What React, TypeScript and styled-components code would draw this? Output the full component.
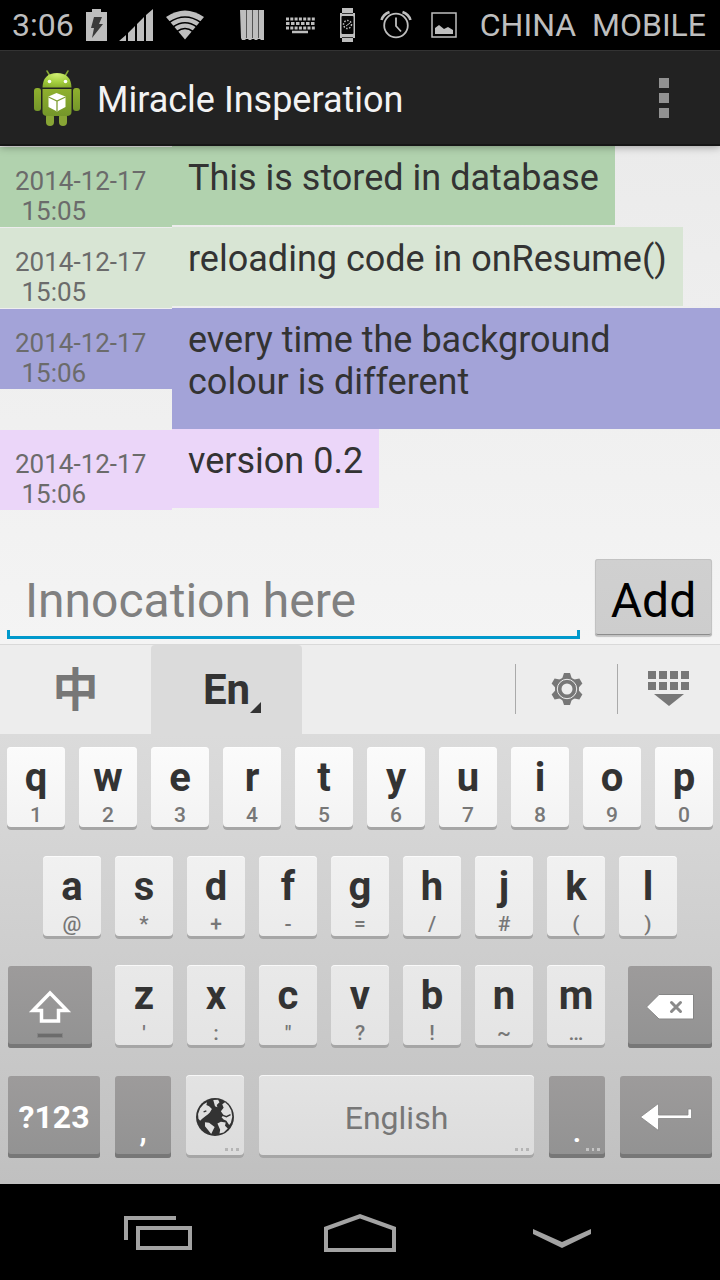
import React from "react";
import styled, { createGlobalStyle, css } from "styled-components";

const GlobalStyle = createGlobalStyle`
  * { box-sizing: border-box; }
  body { margin: 0; background: #000; font-family: Roboto, "Noto Sans CJK SC", sans-serif; }
  button, input { font: inherit; color: inherit; border: 0; padding: 0; margin: 0; background: none; border-radius: 0; outline: none; }
  h1, p { margin: 0; font-weight: 400; }
  svg { display: block; }
`;

const Screen = styled.div`
  min-height: 100vh;
  display: flex;
  flex-direction: column;
  background: #000;
`;

/* ---------- status bar ---------- */
const StatusBar = styled.header`
  height: 50px;
  display: flex;
  align-items: center;
  justify-content: space-between;
  padding: 0 14px 0 12px;
  color: #bebebe;
  font-size: 32px;
  line-height: 50px;
  white-space: pre;
`;
const StatusGroup = styled.div<{ $gap: number }>`
  display: flex;
  align-items: center;
  gap: ${(p) => p.$gap}px;
`;
const StatusSlots = styled.div`
  display: flex;
  svg { width: 48px; height: 36px; }
`;

/* ---------- action bar ---------- */
const ActionBar = styled.div`
  position: relative;
  height: 96px;
  display: flex;
  align-items: center;
  gap: 16px;
  padding: 0 32px;
  background: #222;
  border-top: 1px solid #333;
  border-bottom: 2px solid #161616;
  box-shadow: 0 1px 8px rgba(0, 0, 0, 0.35);
  color: #f3f3f3;
`;
const Title = styled.h1`
  flex: 1;
  padding-top: 4px;
  font-size: 36px;
  line-height: 42px;
`;
const MenuButton = styled.button`
  width: 48px;
  height: 48px;
  display: grid;
  place-items: center;
`;

/* ---------- entries ---------- */
const Content = styled.main`
  flex: 1;
  display: flex;
  flex-direction: column;
  background: linear-gradient(#ebebeb, #f4f4f4);
`;
const Entries = styled.div`
  flex: 1;
`;
const Entry = styled.div`
  display: flex;
  align-items: flex-start;
  color: #333;
`;
const Stamp = styled.time<{ $tint: string }>`
  flex: none;
  width: 172px;
  height: 80px;
  margin-top: 1px;
  padding: 19px 15px 0;
  background: ${(p) => p.$tint};
  color: #6b6b6b;
  font-size: 26px;
  line-height: 30px;
  white-space: pre;
`;
const Message = styled.p<{ $tint: string }>`
  padding: 11px 16px 26px;
  background: ${(p) => p.$tint};
  font-size: 36px;
  line-height: 42px;
`;

const Composer = styled.form`
  display: flex;
  align-items: flex-end;
  gap: 15px;
  padding: 0 8px 8px 7px;
`;
const Field = styled.input`
  flex: 1;
  min-width: 0;
  height: 80px;
  margin-bottom: -3px;
  padding: 2px 18px 0;
  font-size: 48px;
  color: #333;
  background:
    linear-gradient(#0099cc, #0099cc) left bottom / 100% 3px no-repeat,
    linear-gradient(#0099cc, #0099cc) left bottom / 3px 9px no-repeat,
    linear-gradient(#0099cc, #0099cc) right bottom / 3px 9px no-repeat;
  &::placeholder { color: #808080; opacity: 1; }
`;
const AddButton = styled.button`
  width: 117px;
  height: 77px;
  padding-top: 7px;
  border-radius: 3px;
  background: linear-gradient(#d0d0d0, #cdcdcd);
  box-shadow: inset 0 0 0 1px #c2c2c2, inset 0 -2px 0 #8c8c8c, 0 1px 1px rgba(0, 0, 0, 0.2);
  color: #000;
  font-size: 48px;
  line-height: 56px;
`;

/* ---------- keyboard ---------- */
const ToolStrip = styled.div`
  height: 90px;
  display: flex;
  padding-right: 1px;
  background: #ededed;
  border-top: 1px solid #d9d9d9;
`;
const Tab = styled.button<{ $active?: boolean }>`
  width: 21%;
  display: flex;
  align-items: center;
  justify-content: center;
  color: ${(p) => (p.$active ? "#333" : "#777")};
  font-size: ${(p) => (p.$active ? 42 : 46)}px;
  font-weight: 700;
  background: ${(p) => (p.$active ? "#dbdbdb" : "none")};
  padding: ${(p) => (p.$active ? "0 0 0 11px" : "0 0 8px")};
  border-radius: 4px 4px 0 0;
  svg { align-self: flex-end; margin: 0 0 21px 0; }
`;
const Filler = styled.div`
  flex: 1;
`;
const Tool = styled.button`
  width: 102px;
  height: 50px;
  margin-top: 19px;
  display: grid;
  place-items: center;
  border-left: 1px solid #aaa;
`;
const Keys = styled.div`
  display: flex;
  flex-direction: column;
  gap: 26px;
  padding: 13px 0 26px;
  background: linear-gradient(#dbdbdb, #c0c0c0);
`;
const Row = styled.div<{ $pad: number; $gap: number }>`
  display: flex;
  gap: ${(p) => p.$gap}px;
  padding: 0 ${(p) => p.$pad}px;
  &:last-child { padding-top: 1px; }
`;
const LetterGroup = styled.div`
  flex: 490 1 0;
  min-width: 0;
  display: flex;
  gap: 14px;
`;
const shades = [
  ["#fbfbfb", "#f3f3f3"],
  ["#f1f1f1", "#ebebeb"],
  ["#e9e9e9", "#e4e4e4"],
  ["#e3e3e3", "#dcdcdc"],
];
const Key = styled.button<{ $grow: number; $shade?: number; $dark?: boolean }>`
  position: relative;
  flex: ${(p) => p.$grow} 1 0;
  min-width: 0;
  height: 83px;
  display: flex;
  flex-direction: column;
  align-items: center;
  border-radius: 4px;
  ${(p) =>
    p.$dark
      ? css`
          height: 82px;
          margin-top: 1px;
          border-radius: 3px;
          justify-content: center;
          color: #fff;
          background: linear-gradient(#9d9b9b, #929292);
          box-shadow: inset 0 -4px 0 #777;
        `
      : css`
          color: #333;
          background: linear-gradient(${shades[p.$shade || 0].join(",")});
          box-shadow: inset 0 1px 0 rgba(255, 255, 255, 0.7), inset 0 -3px 0 #a6a6a6;
        `}
`;
const Letter = styled.span`
  font-size: 40px;
  line-height: 62px;
  font-weight: 700;
`;
const Alt = styled.span`
  font-size: 21px;
  line-height: 13px;
  font-weight: 500;
  color: #777;
`;
const ModeLabel = styled.span`
  font-size: 32px;
  line-height: 40px;
  font-weight: 700;
`;
const Punct = styled.span`
  padding-top: 28px;
  font-size: 32px;
  line-height: 40px;
  font-weight: 500;
`;
const SpaceLabel = styled.span`
  line-height: 86px;
  font-size: 32px;
  color: #777;
`;
const Centered = styled.span`
  flex: 1;
  display: grid;
  place-items: center;
`;
const More = styled.svg`
  position: absolute;
  right: 5px;
  bottom: 7px;
`;

/* ---------- navigation bar ---------- */
const NavBar = styled.nav`
  height: 96px;
  display: flex;
  padding: 0 57px;
`;
const NavButton = styled.button`
  flex: 1;
  display: grid;
  place-items: center;
  padding-top: 2px;
`;

const Dots = ({ fill }: { fill: string }) => (
  <More width="14" height="3" viewBox="0 0 14 3" fill={fill} aria-hidden="true">
    <path d="M0 0h3v3H0zM6 0h2v3H6zM11 0h3v3h-3z" />
  </More>
);

const StatusLeftIcons = () => (
  <>
    <svg width="21" height="32" viewBox="0 0 21 32" fill="#bebebe">
      <path d="M6 0h9v3h6v29H0V3h6z" />
      <path d="M8 8h8l-3 7h4L6 29l2-10H5z" fill="#3a3a3a" />
    </svg>
    <svg width="34" height="32" viewBox="0 0 34 32" fill="#bebebe">
      <path d="M0 32l7-6v6zM9 24l7-7v15H9zM18 15l7-7v24h-7zM27 6l7-6v32h-7z" />
    </svg>
    <svg width="40" height="30" viewBox="0 0 40 30">
      <path d="M1 7Q20-6 39 7L20 29.500z" fill="#bebebe" />
      <path d="M4 12.500Q20 1.500 36 12.500M8 17Q20 8.500 32 17M12 21.500Q20 15.500 28 21.500" fill="none" stroke="#000" strokeWidth="1.600" />
    </svg>
  </>
);

const StatusRightIcons = () => (
  <StatusSlots>
    <svg viewBox="0 0 48 36">
      <path d="M12 3h24v30h-3l-1-1h-2l-1 1h-2l-1-1h-2l-1 1h-2l-1-1h-2l-1 1h-3l-1-2z" fill="#bebebe" />
      <path d="M18.500 3v28M24.500 3v28M30.500 3v28" stroke="#555" />
    </svg>
    <svg viewBox="0 0 48 36" fill="none" stroke="#bebebe">
      <path d="M10 12h29" strokeWidth="3" strokeDasharray="3 1.300" />
      <path d="M10 16.500h29" strokeWidth="3" strokeDasharray="3.500 1.500" />
      <path d="M10 21h29" strokeWidth="3" strokeDasharray="3 1.300" />
      <path d="M16 25h16" strokeWidth="2.500" />
    </svg>
    <svg viewBox="0 0 48 36">
      <path d="M18 1h11v5h2v25h-2v4H18v-4h-2V6h2z" fill="#bebebe" />
      <rect x="17.500" y="9" width="12" height="18" rx="1" fill="#050505" />
      <path d="M18 6.500h11M18 30.500h11" stroke="#333" />
      <circle cx="23.500" cy="17.500" r="4" fill="none" stroke="#bebebe" strokeWidth="1.500" strokeDasharray="1.500 1.500" />
      <path d="M22 19l4-3" stroke="#bebebe" />
    </svg>
    <svg viewBox="0 0 48 36" fill="none" stroke="#bebebe">
      <circle cx="24" cy="18.500" r="11.800" strokeWidth="1.800" />
      <path d="M24 10.500v8.500l5 5.500" strokeWidth="1.800" />
      <path d="M9.500 13Q11 7.500 17.500 5M38.500 13Q37 7.500 30.500 5" strokeWidth="2.500" />
    </svg>
    <svg viewBox="0 0 48 36">
      <rect x="12" y="6" width="24" height="24" fill="none" stroke="#bebebe" strokeWidth="1.500" />
      <path d="M15 27v-6l4-3 5 4 4-2 5 3v4z" fill="#bebebe" />
    </svg>
  </StatusSlots>
);

const AppIcon = () => (
  <svg width="49" height="58" viewBox="0 0 49 58" aria-hidden="true">
    <defs>
      <linearGradient id="body" x1="0" y1="0" x2="0" y2="1">
        <stop offset="0" stopColor="#8fb02e" />
        <stop offset="1" stopColor="#74962a" />
      </linearGradient>
      <radialGradient id="head" cx="0.5" cy="0.1" r="0.9">
        <stop offset="0" stopColor="#d0ee72" />
        <stop offset="0.6" stopColor="#a4cf3e" />
        <stop offset="1" stopColor="#8ab02e" />
      </radialGradient>
    </defs>
    <path d="M15 2l3 5M36 2l-3 5" stroke="#86a832" strokeWidth="1.500" strokeLinecap="round" />
    <rect x="2" y="19" width="7" height="23" rx="3" fill="url(#body)" />
    <rect x="41" y="19" width="7" height="23" rx="3" fill="url(#body)" />
    <rect x="14" y="44" width="8" height="13" rx="4" fill="#88a535" />
    <rect x="27" y="44" width="8" height="13" rx="4" fill="#88a535" />
    <path d="M10.500 20h29v23q0 4-5 4h-19q-5 0-5-4z" fill="url(#body)" />
    <path d="M10.500 18.500Q11 4 25 4t14.500 14.500z" fill="url(#head)" />
    <circle cx="17.500" cy="12.500" r="1.800" fill="#fff" />
    <circle cx="33.500" cy="12.500" r="1.800" fill="#fff" />
    <path d="M24.500 24l9 3.500v10.500l-8.500 4.500-8.500-4.500V27.500z" fill="#fff" />
    <path d="M16.500 28l8.500 4 8.500-4M25 32v10" fill="none" stroke="#7f9e33" strokeWidth="1.300" />
  </svg>
);

const GearIcon = () => (
  <svg width="32" height="32" viewBox="0 0 32 32" aria-hidden="true">
    <g fill="#777">
      {[0, 60, 120].map((a) => (
        <path key={a} d="M13 0h6l2 6v20l-2 6h-6l-2-6V6z" transform={`rotate(${a} 16 16)`} />
      ))}
      <circle cx="16" cy="16" r="12" />
    </g>
    <circle cx="16" cy="16" r="9.700" fill="none" stroke="#ededed" strokeWidth="1" />
    <circle cx="16" cy="16" r="5.500" fill="#ededed" />
  </svg>
);

const HideKeyboardIcon = () => (
  <svg width="42" height="36" viewBox="0 0 42 36" fill="#777" aria-hidden="true">
    {[0, 11, 22, 33].map((x) => (
      <path key={x} d={`M${x} 0h8v8h-8zM${x} 11h8v8h-8z`} />
    ))}
    <path d="M6 23h30L21 35z" />
  </svg>
);

const GlobeIcon = () => (
  <svg width="38" height="38" viewBox="0 0 110 110" aria-hidden="true">
    <circle cx="55" cy="55" r="55" fill="#333" />
    <g fill="#e0e0e0">
      <path d="M6 46L12 30 22 18 32 12 30 20 38 24 46 32 40 42 34 48 28 52 18 60 12 66 7 60z" />
      <path d="M26 70L38 72 54 84 50 92 44 104 36 94 26 82z" />
      <path d="M62 74L72 69 86 71 84 80 92 88 80 100 68 103 70 92z" />
      <path d="M84 12L94 22 102 36 105 54 101 72 96 78 88 66 80 62 74 56 80 50 76 44 72 38 80 28 76 18z" />
      <path d="M50 6L64 5 68 12 60 20 62 27 55 24z" />
    </g>
    <path d="M74 49l14 5 12-6M22 40l8-3" stroke="#333" strokeWidth="4" fill="none" />
  </svg>
);

const entries = [
  { day: "2014-12-17", hour: "15:05", text: "This is stored in database", tint: "#b1d2ae" },
  { day: "2014-12-17", hour: "15:05", text: "reloading code in onResume()", tint: "#d8e5d4" },
  { day: "2014-12-17", hour: "15:06", text: "every time the background colour is different", tint: "#a3a3d8" },
  { day: "2014-12-17", hour: "15:06", text: "version 0.2", tint: "#ebd6f9" },
];

const row1 = ["q1", "w2", "e3", "r4", "t5", "y6", "u7", "i8", "o9", "p0"];
const row2 = ["a@", "s*", "d+", "f-", "g=", "h/", "j#", "k(", "l)"];
const row3 = ["z'", "x:", 'c"', "v?", "b!", "n~", "m…"];

const Letters = ({ keys, shade }: { keys: string[]; shade: number }) => (
  <>
    {keys.map((k) => (
      <Key key={k} type="button" $grow={58} $shade={shade}>
        <Letter>{k[0]}</Letter>
        <Alt>{k[1]}</Alt>
      </Key>
    ))}
  </>
);

export default function App() {
  return (
    <Screen>
      <GlobalStyle />
      <StatusBar>
        <StatusGroup $gap={12}>
          <span>3:06</span>
          <StatusLeftIcons />
        </StatusGroup>
        <StatusGroup $gap={12}>
          <StatusRightIcons />
          <span>{"CHINA  MOBILE"}</span>
        </StatusGroup>
      </StatusBar>

      <ActionBar>
        <AppIcon />
        <Title>Miracle Insperation</Title>
        <MenuButton type="button" aria-label="More options">
          <svg width="10" height="40" viewBox="0 0 10 40" fill="#929292">
            <path d="M0 0h10v10H0zM0 15h10v10H0zM0 30h10v10H0z" />
          </svg>
        </MenuButton>
      </ActionBar>

      <Content>
        <Entries>
          {entries.map((e) => (
            <Entry key={e.text}>
              <Stamp $tint={e.tint}>{`${e.day}\n ${e.hour}`}</Stamp>
              <Message $tint={e.tint}>{e.text}</Message>
            </Entry>
          ))}
        </Entries>
        <Composer onSubmit={(ev) => ev.preventDefault()}>
          <Field type="text" placeholder="Innocation here" aria-label="Innocation here" />
          <AddButton type="submit">Add</AddButton>
        </Composer>
      </Content>

      <ToolStrip>
        <Tab type="button">中</Tab>
        <Tab type="button" $active>
          En
          <svg width="11" height="11" viewBox="0 0 11 11" fill="#333"><path d="M11 0v11H0z" /></svg>
        </Tab>
        <Filler />
        <Tool type="button" aria-label="Keyboard settings"><GearIcon /></Tool>
        <Tool type="button" aria-label="Hide keyboard"><HideKeyboardIcon /></Tool>
      </ToolStrip>

      <Keys>
        <Row $pad={7} $gap={14}><Letters keys={row1} shade={0} /></Row>
        <Row $pad={43} $gap={14}><Letters keys={row2} shade={1} /></Row>
        <Row $pad={8} $gap={23}>
          <Key type="button" $grow={84} $dark aria-label="Shift">
            <svg width="44" height="62" viewBox="0 0 44 62">
              <path d="M22 17L39 34.500H30.500V45H13.500V34.500H5z" fill="none" stroke="#fff" strokeWidth="3.500" />
              <path d="M9 57h26v5H9z" fill="#858585" />
              <path d="M10 58h24v3H10z" fill="#6c6c6c" />
            </svg>
          </Key>
          <LetterGroup><Letters keys={row3} shade={2} /></LetterGroup>
          <Key type="button" $grow={84} $dark aria-label="Backspace">
            <svg width="48" height="26" viewBox="0 0 48 26">
              <path d="M0.500 13L13 0.500H47.500V25H13z" fill="#fff" stroke="#858585" />
              <path d="M25.500 8.500l9 9M34.500 8.500l-9 9" stroke="#8a8a8a" strokeWidth="3" strokeLinecap="round" />
            </svg>
          </Key>
        </Row>
        <Row $pad={8} $gap={15}>
          <Key type="button" $grow={92} $dark><ModeLabel>?123</ModeLabel></Key>
          <Key type="button" $grow={56} $dark><Punct>,</Punct></Key>
          <Key type="button" $grow={58} $shade={3} aria-label="Switch language">
            <Centered><GlobeIcon /></Centered>
            <Dots fill="#b5b5b5" />
          </Key>
          <Key type="button" $grow={275} $shade={3}>
            <SpaceLabel>English</SpaceLabel>
            <Dots fill="#b5b5b5" />
          </Key>
          <Key type="button" $grow={56} $dark><Punct>.</Punct><Dots fill="#c4c4c4" /></Key>
          <Key type="button" $grow={92} $dark aria-label="Enter">
            <svg width="52" height="28" viewBox="0 0 52 28">
              <path d="M0.500 14L18.500 0.500V12H48V6h3.500v9.500H18.500V27.500z" fill="#fff" stroke="#858585" strokeWidth="0.800" />
            </svg>
          </Key>
        </Row>
      </Keys>

      <NavBar>
        <NavButton type="button" aria-label="Recent apps">
          <svg width="68" height="34" viewBox="0 0 68 34" fill="#a3a3a3">
            <path d="M0 0h52v4H4v20H0z" />
            <path fillRule="evenodd" d="M12 10h56v24H12zM16 14v16h48V14z" />
          </svg>
        </NavButton>
        <NavButton type="button" aria-label="Home">
          <svg width="72" height="38" viewBox="0 0 72 38" fill="#a3a3a3">
            <path fillRule="evenodd" d="M36 0l36 13v25H0V13zM36 4.500L4 16v18h64V16z" />
          </svg>
        </NavButton>
        <NavButton type="button" aria-label="Hide">
          <svg width="60" height="30" viewBox="0 0 60 30" fill="#a3a3a3">
            <path d="M1 11l29 13 29-13v5L30 30 1 16z" />
          </svg>
        </NavButton>
      </NavBar>
    </Screen>
  );
}
